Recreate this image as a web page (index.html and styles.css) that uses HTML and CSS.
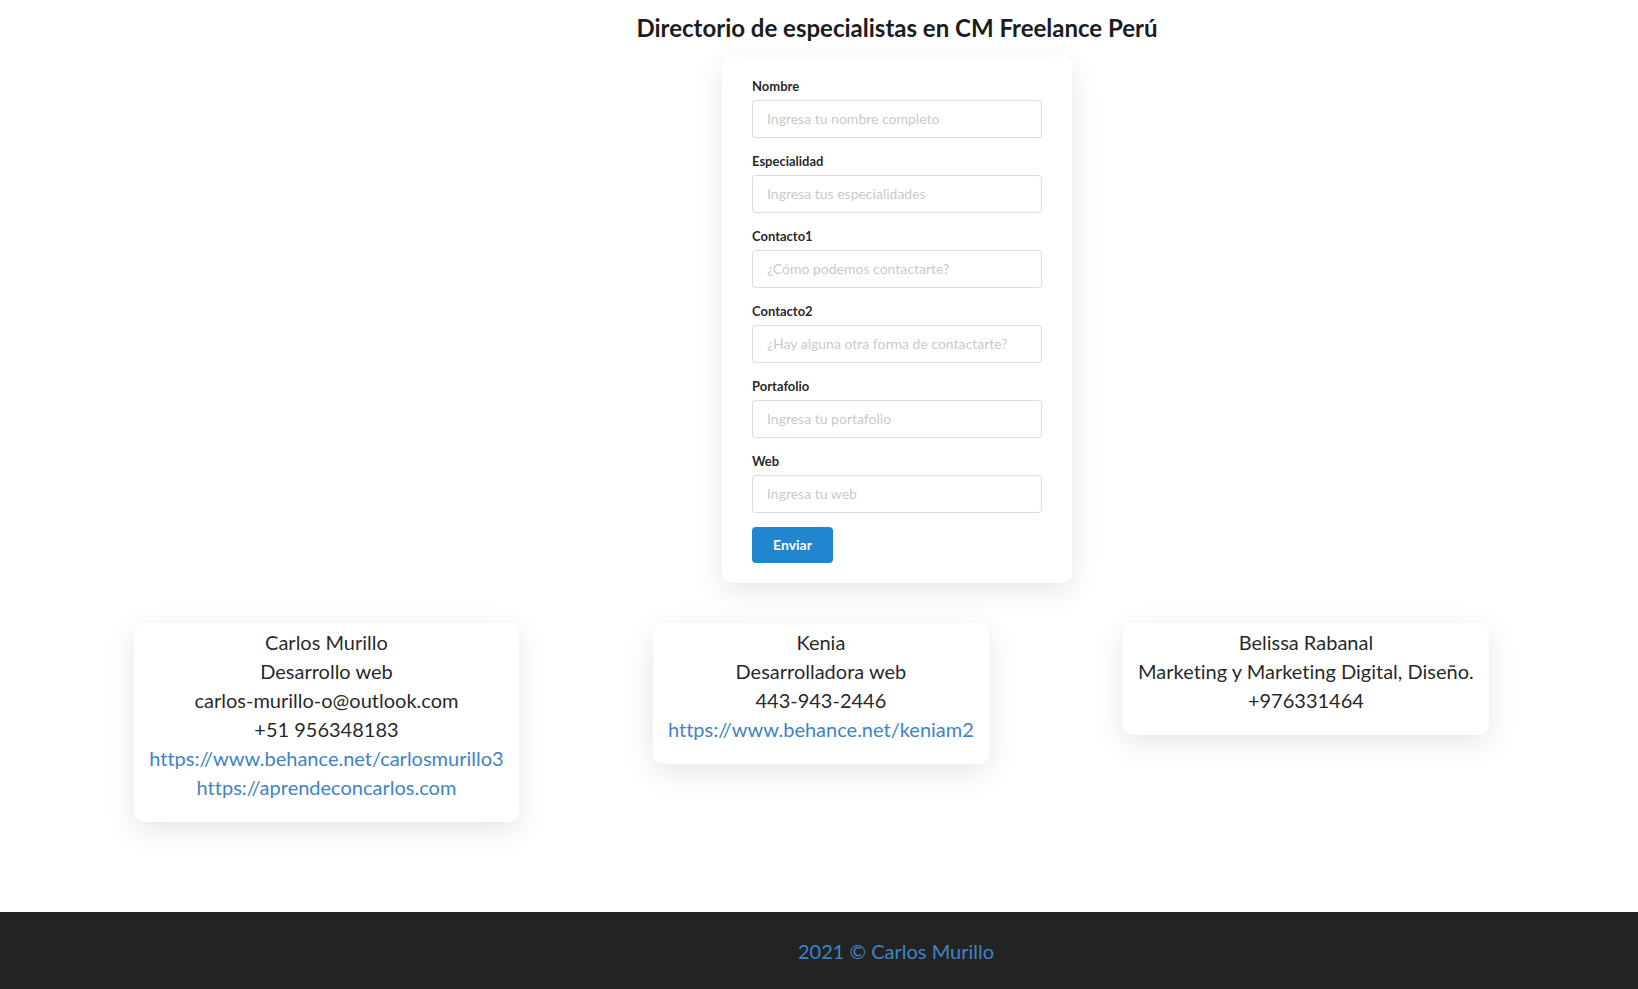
FILE: index.html
```html
<!DOCTYPE html>
<html lang="es">
<head>
<meta charset="utf-8">
<title>Directorio de especialistas en CM Freelance Perú</title>
<link rel="stylesheet" href="styles.css">
</head>
<body>
<main class="page">
  <section class="top">
    <h1 class="title">Directorio de especialistas en CM Freelance Perú</h1>
    <form class="form-card">
      <div class="field">
        <label class="label">Nombre</label>
        <input class="input" type="text" placeholder="Ingresa tu nombre completo">
      </div>
      <div class="field">
        <label class="label">Especialidad</label>
        <input class="input" type="text" placeholder="Ingresa tus especialidades">
      </div>
      <div class="field">
        <label class="label">Contacto1</label>
        <input class="input" type="text" placeholder="¿Cómo podemos contactarte?">
      </div>
      <div class="field">
        <label class="label">Contacto2</label>
        <input class="input" type="text" placeholder="¿Hay alguna otra forma de contactarte?">
      </div>
      <div class="field">
        <label class="label">Portafolio</label>
        <input class="input" type="text" placeholder="Ingresa tu portafolio">
      </div>
      <div class="field">
        <label class="label">Web</label>
        <input class="input" type="text" placeholder="Ingresa tu web">
      </div>
      <button class="button" type="button">Enviar</button>
    </form>
  </section>
  <section class="cards">
    <div class="card">
      <div class="line">Carlos Murillo</div>
      <div class="line">Desarrollo web</div>
      <div class="line">carlos-murillo-o@outlook.com</div>
      <div class="line">+51 956348183</div>
      <a class="line link" href="#">https://www.behance.net/carlosmurillo3</a>
      <a class="line link" href="#">https://aprendeconcarlos.com</a>
    </div>
    <div class="card">
      <div class="line">Kenia</div>
      <div class="line">Desarrolladora web</div>
      <div class="line">443-943-2446</div>
      <a class="line link" href="#">https://www.behance.net/keniam2</a>
    </div>
    <div class="card">
      <div class="line">Belissa Rabanal</div>
      <div class="line">Marketing y Marketing Digital, Diseño.</div>
      <div class="line">+976331464</div>
    </div>
  </section>
</main>
<footer class="footer">
  <span class="footer-text">2021 © Carlos Murillo</span>
</footer>
</body>
</html>
```
FILE: styles.css
```css
* { box-sizing: border-box; }
html, body { margin: 0; padding: 0; }
body {
  font-family: Lato, "Open Sans", "Liberation Sans", sans-serif;
  font-size: 14px;
  color: rgba(0,0,0,.87);
  background: #fff;
  overflow-x: hidden;
  font-variant-ligatures: no-common-ligatures;
}
.top {
  display: flex;
  flex-direction: column;
  align-items: center;
  padding-left: 156px;
}
.title {
  margin: 13px 0 15px;
  font-size: 24px;
  line-height: 29px;
  font-weight: 700;
  color: #1b1c1d;
}
.form-card {
  width: 350px;
  padding: 20px 30px;
  background: #fff;
  border-radius: 10px;
  box-shadow: 0 8px 30px rgba(0,0,0,.1);
}
.field { margin-bottom: 14px; }
.label {
  display: block;
  margin-bottom: 4px;
  font-size: 13px;
  line-height: 19px;
  font-weight: 700;
  color: rgba(0,0,0,.87);
}
.input {
  display: block;
  width: 100%;
  height: 38px;
  padding: 9px 14px 10px;
  font-family: inherit;
  font-size: 14px;
  line-height: 17px;
  color: rgba(0,0,0,.87);
  border: 1px solid rgba(34,36,38,.15);
  border-radius: 4px;
  outline: none;
  background: #fff;
}
.input::placeholder { color: rgba(191,191,191,.87); }
.button {
  display: block;
  height: 36px;
  padding: 0 21px;
  font-family: inherit;
  font-size: 14px;
  font-weight: 700;
  line-height: 36px;
  color: #fff;
  background: #2185d0;
  border: 0;
  border-radius: 4px;
}
.cards {
  display: flex;
  justify-content: space-evenly;
  align-items: flex-start;
  width: 1623px;
  margin-top: 40px;
  padding-bottom: 90px;
}
.card {
  display: flex;
  flex-direction: column;
  align-items: center;
  padding: 5px 15px 20px;
  background: #fff;
  border-radius: 10px;
  box-shadow: 0 8px 30px rgba(0,0,0,.1);
  font-size: 20px;
  line-height: 29px;
  color: rgba(0,0,0,.87);
  text-align: center;
}
.line { display: block; white-space: nowrap; }
.link { color: #4183c4; text-decoration: none; }
.footer {
  height: 77px;
  background: #232323;
  display: flex;
  align-items: center;
  justify-content: center;
  padding-left: 154px;
}
.footer-text {
  font-size: 20px;
  color: #4183c4;
}
```
